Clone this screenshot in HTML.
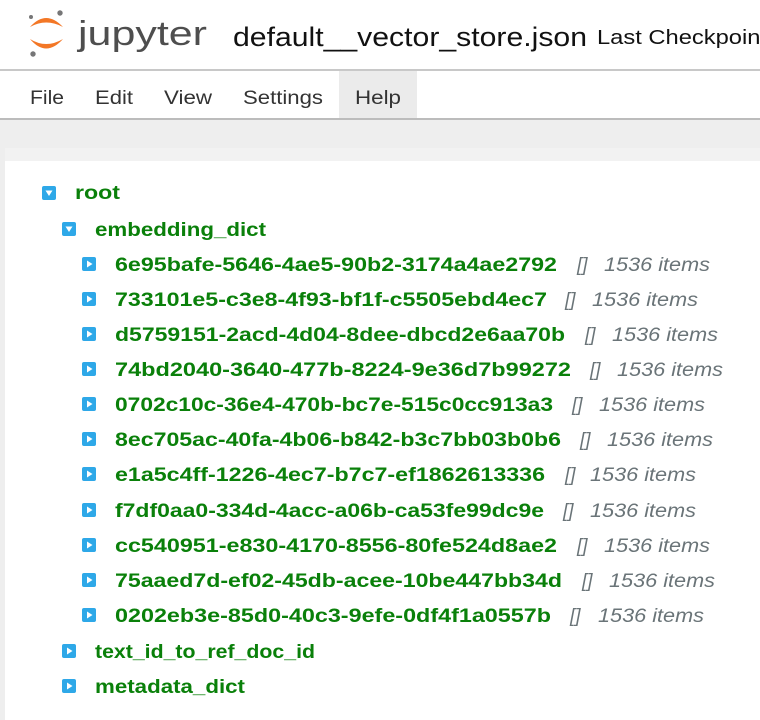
<!DOCTYPE html>
<html><head><meta charset="utf-8"><style>
html,body{margin:0;padding:0;width:760px;height:720px;overflow:hidden;background:#fff}
svg{display:block}
.m{font-family:"Liberation Sans",sans-serif;font-size:19px;fill:#333}
.k{font-family:"Liberation Sans",sans-serif;font-size:19px;font-weight:bold;fill:#0a800a}
.g{font-family:"Liberation Sans",sans-serif;font-size:19px;font-style:italic;fill:#6a7478}
</style></head><body>
<svg width="760" height="720" viewBox="0 0 760 720" xmlns="http://www.w3.org/2000/svg">
<defs>
<g id="down"><rect x="0" y="0" width="14" height="14" rx="2" fill="#2ea8e8"/><path d="M3.5 4.5 L10.5 4.5 L7 10 Z" fill="#fff"/></g>
<g id="right"><rect x="0" y="0" width="14" height="14" rx="2" fill="#2ea8e8"/><path d="M5 3.5 L10.5 7 L5 10.5 Z" fill="#fff"/></g>
</defs>
<rect width="760" height="70" fill="#fff"/>
<!-- logo -->
<path d="M30 27 Q46 9 63 27 Q46 18 30 27 Z" fill="#f37726"/>
<path d="M30 39 Q46 58 63 39 Q46 49 30 39 Z" fill="#f37726"/>
<circle cx="60" cy="13" r="2.7" fill="#767677"/><circle cx="31" cy="17" r="2" fill="#767677"/><circle cx="33" cy="54" r="2.7" fill="#767677"/>
<text x="78" y="45" font-family="Liberation Sans,sans-serif" font-size="34" fill="#4e4e4e" textLength="129" lengthAdjust="spacingAndGlyphs">jupyter</text>
<text x="233" y="46" font-family="Liberation Sans,sans-serif" font-size="27" fill="#111" textLength="354" lengthAdjust="spacingAndGlyphs">default__vector_store.json</text>
<text x="597" y="44" font-family="Liberation Sans,sans-serif" font-size="20" fill="#111" textLength="170" lengthAdjust="spacingAndGlyphs">Last Checkpoint</text>
<rect x="0" y="69" width="760" height="2" fill="#c8c8c8"/>
<rect x="339" y="71" width="78" height="47" fill="#ebebeb"/>
<text class="m" x="30" y="104" textLength="34" lengthAdjust="spacingAndGlyphs">File</text>
<text class="m" x="95" y="104" textLength="38" lengthAdjust="spacingAndGlyphs">Edit</text>
<text class="m" x="164" y="104" textLength="48" lengthAdjust="spacingAndGlyphs">View</text>
<text class="m" x="243" y="104" textLength="80" lengthAdjust="spacingAndGlyphs">Settings</text>
<text class="m" x="355" y="104" textLength="46" lengthAdjust="spacingAndGlyphs">Help</text>
<rect x="0" y="118" width="760" height="2" fill="#bcbcbc"/>
<rect x="0" y="120" width="760" height="600" fill="#eeeeee"/>
<rect x="5" y="148" width="755" height="572" fill="#fff"/>
<rect x="5" y="148" width="755" height="13" fill="#f2f2f2"/>
<use href="#down" x="42" y="186"/>
<text class="k" x="75" y="199" textLength="45" lengthAdjust="spacingAndGlyphs">root</text>
<use href="#down" x="62" y="222"/>
<text class="k" x="95" y="236" textLength="171" lengthAdjust="spacingAndGlyphs">embedding_dict</text>
<g>
<use href="#right" x="82" y="257"/><text class="k" x="115" y="271" textLength="442" lengthAdjust="spacingAndGlyphs">6e95bafe-5646-4ae5-90b2-3174a4ae2792</text><text class="g" x="577" y="271">[]</text><text class="g" x="604" y="271" textLength="106" lengthAdjust="spacingAndGlyphs">1536 items</text>
<use href="#right" x="82" y="292"/><text class="k" x="115" y="306" textLength="432" lengthAdjust="spacingAndGlyphs">733101e5-c3e8-4f93-bf1f-c5505ebd4ec7</text><text class="g" x="565" y="306">[]</text><text class="g" x="592" y="306" textLength="106" lengthAdjust="spacingAndGlyphs">1536 items</text>
<use href="#right" x="82" y="327"/><text class="k" x="115" y="341" textLength="450" lengthAdjust="spacingAndGlyphs">d5759151-2acd-4d04-8dee-dbcd2e6aa70b</text><text class="g" x="585" y="341">[]</text><text class="g" x="612" y="341" textLength="106" lengthAdjust="spacingAndGlyphs">1536 items</text>
<use href="#right" x="82" y="362"/><text class="k" x="115" y="376" textLength="456" lengthAdjust="spacingAndGlyphs">74bd2040-3640-477b-8224-9e36d7b99272</text><text class="g" x="590" y="376">[]</text><text class="g" x="617" y="376" textLength="106" lengthAdjust="spacingAndGlyphs">1536 items</text>
<use href="#right" x="82" y="397"/><text class="k" x="115" y="411" textLength="438" lengthAdjust="spacingAndGlyphs">0702c10c-36e4-470b-bc7e-515c0cc913a3</text><text class="g" x="572" y="411">[]</text><text class="g" x="599" y="411" textLength="106" lengthAdjust="spacingAndGlyphs">1536 items</text>
<use href="#right" x="82" y="432"/><text class="k" x="115" y="446" textLength="446" lengthAdjust="spacingAndGlyphs">8ec705ac-40fa-4b06-b842-b3c7bb03b0b6</text><text class="g" x="580" y="446">[]</text><text class="g" x="607" y="446" textLength="106" lengthAdjust="spacingAndGlyphs">1536 items</text>
<use href="#right" x="82" y="467"/><text class="k" x="115" y="481" textLength="430" lengthAdjust="spacingAndGlyphs">e1a5c4ff-1226-4ec7-b7c7-ef1862613336</text><text class="g" x="565" y="481">[]</text><text class="g" x="590" y="481" textLength="106" lengthAdjust="spacingAndGlyphs">1536 items</text>
<use href="#right" x="82" y="503"/><text class="k" x="115" y="517" textLength="429" lengthAdjust="spacingAndGlyphs">f7df0aa0-334d-4acc-a06b-ca53fe99dc9e</text><text class="g" x="563" y="517">[]</text><text class="g" x="590" y="517" textLength="106" lengthAdjust="spacingAndGlyphs">1536 items</text>
<use href="#right" x="82" y="538"/><text class="k" x="115" y="552" textLength="442" lengthAdjust="spacingAndGlyphs">cc540951-e830-4170-8556-80fe524d8ae2</text><text class="g" x="577" y="552">[]</text><text class="g" x="604" y="552" textLength="106" lengthAdjust="spacingAndGlyphs">1536 items</text>
<use href="#right" x="82" y="573"/><text class="k" x="115" y="587" textLength="447" lengthAdjust="spacingAndGlyphs">75aaed7d-ef02-45db-acee-10be447bb34d</text><text class="g" x="582" y="587">[]</text><text class="g" x="609" y="587" textLength="106" lengthAdjust="spacingAndGlyphs">1536 items</text>
<use href="#right" x="82" y="608"/><text class="k" x="115" y="622" textLength="436" lengthAdjust="spacingAndGlyphs">0202eb3e-85d0-40c3-9efe-0df4f1a0557b</text><text class="g" x="570" y="622">[]</text><text class="g" x="598" y="622" textLength="106" lengthAdjust="spacingAndGlyphs">1536 items</text>
</g>
<use href="#right" x="62" y="644"/>
<text class="k" x="95" y="658" textLength="220" lengthAdjust="spacingAndGlyphs">text_id_to_ref_doc_id</text>
<use href="#right" x="62" y="679"/>
<text class="k" x="95" y="693" textLength="150" lengthAdjust="spacingAndGlyphs">metadata_dict</text>
</svg>
</body></html>
